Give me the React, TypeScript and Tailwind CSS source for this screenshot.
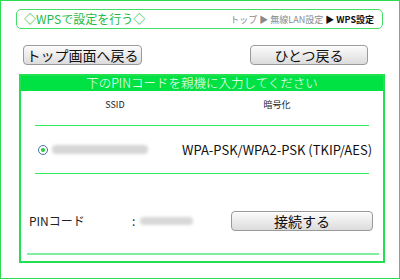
import React from "react";

const jp = { fontFamily: '"Noto Sans CJK JP", "Noto Sans", sans-serif' };

function GrayButton({ label, className }: { label: string; className: string }) {
  return (
    <div
      className={
        "flex items-center justify-center whitespace-nowrap rounded-[4px] border border-[#9a9a9a] bg-gradient-to-b from-[#fbfbfb] via-[#ececec] to-[#dcdcdc] text-[14px] leading-none text-[#111] shadow-[inset_0_1px_0_#fff] " +
        className
      }
    >
      {label}
    </div>
  );
}

export default function App() {
  return (
    <div className="w-[400px] h-[280px] bg-white" style={jp}>
      <div className="w-[400px] h-[279px] border border-[#2ddb4f] flex flex-col">
        {/* header */}
        <div className="ml-[15px] mt-[8px] w-[367px] h-[20px] rounded-[5px] border border-[#45dd65] flex items-center justify-between pl-[7px] pr-[8px]">
          <span className="text-[12px] leading-none text-[#22bb44]">◇WPSで設定を行う◇</span>
          <span className="text-[9px] leading-none text-[#8a8a8a]">
            トップ ▶ 無線LAN設定 <span className="text-[#111] font-bold">▶ WPS設定</span>
          </span>
        </div>
        {/* buttons */}
        <div className="flex justify-between mt-[16px] ml-[22px] mr-[31px]">
          <GrayButton label="トップ画面へ戻る" className="w-[119px] h-[20px]" />
          <GrayButton label="ひとつ戻る" className="w-[118px] h-[20px]" />
        </div>
        {/* panel */}
        <div className="ml-[18px] mt-[9px] w-[366px] h-[189px] border-2 border-[#22e050] flex flex-col">
          <div className="h-[15px] bg-[#00e244] flex items-center justify-center text-white text-[12.5px] font-light leading-none">
            下のPINコードを親機に入力してください
          </div>
          <div className="h-[28px] flex items-center text-[9px] text-[#222]">
            <div className="w-[188px] text-center">SSID</div>
            <div className="w-[136px] text-center">暗号化</div>
          </div>
          <div className="h-[6px]" />
          <div className="h-[1px] mx-[14px] bg-[#33ee55]" />
          <div className="h-[47px] flex items-center">
            <div className="ml-[17px] w-[10px] h-[10px] rounded-full border border-[#4a6fa0] bg-white flex items-center justify-center">
              <div className="w-[4px] h-[4px] rounded-full bg-[#22cc33]" />
            </div>
            <div className="ml-[4px] w-[96px] h-[9px] rounded-sm bg-[#d6d6d6] blur-[1.5px]" />
            <div className="ml-[34px] text-[13px] leading-none text-[#111] whitespace-nowrap">
              WPA-PSK/WPA2-PSK (TKIP/AES)
            </div>
          </div>
          <div className="h-[1px] mx-[14px] bg-[#33ee55]" />
          <div className="h-[37px]" />
          <div className="h-[20px] flex items-center">
            <div className="ml-[8px] w-[103px] text-[12px] leading-none text-[#222]">PINコード</div>
            <div className="text-[12px] leading-none text-[#222] w-[8px]">:</div>
            <div className="w-[53px] h-[8px] rounded-sm bg-[#d8d8d8] blur-[1.5px]" />
            <GrayButton label="接続する" className="ml-[38px] w-[142px] h-[20px]" />
          </div>
          <div className="h-[22px]" />
          <div className="h-[2px] ml-[6px] mr-[4px] bg-[#80ee9c]" />
        </div>
      </div>
    </div>
  );
}
